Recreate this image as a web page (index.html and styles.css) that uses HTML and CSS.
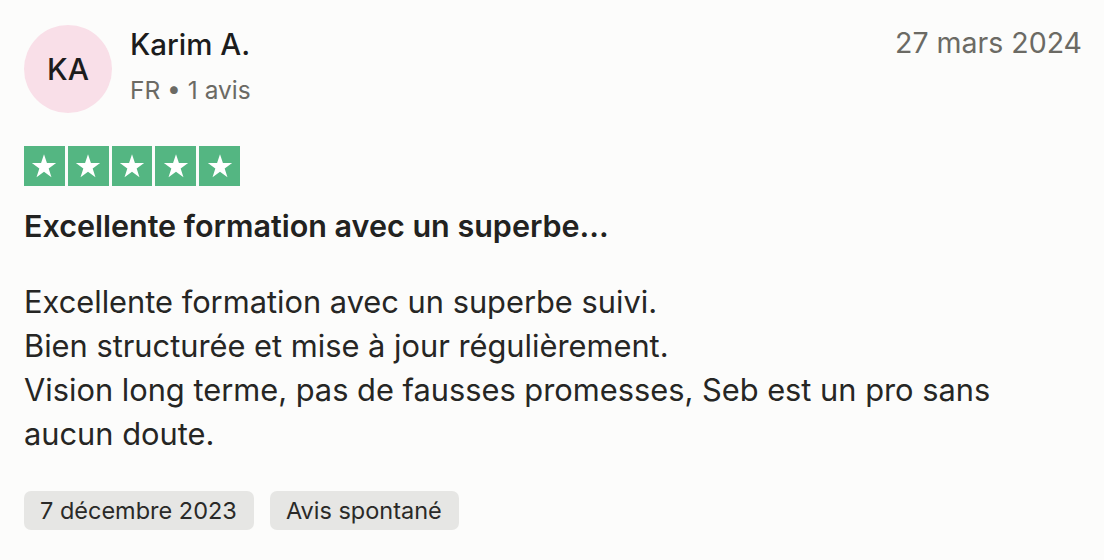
FILE: index.html
```html
<!DOCTYPE html>
<html lang="fr">
<head>
<meta charset="utf-8">
<link rel="stylesheet" href="styles.css">
</head>
<body>
<article class="review">
  <header class="head">
    <div class="avatar">KA</div>
    <div class="who">
      <div class="name">Karim A.</div>
      <div class="meta">FR • 1 avis</div>
    </div>
    <time class="date">27 mars 2024</time>
  </header>
  <div class="stars">
    <span class="star"><svg viewBox="0 0 24 24"><path d="M12 3.2l2.2 6.6h6.9l-5.6 4.1 2.1 6.6L12 16.4l-5.6 4.1 2.1-6.6-5.6-4.1h6.9z"/></svg></span>
    <span class="star"><svg viewBox="0 0 24 24"><path d="M12 3.2l2.2 6.6h6.9l-5.6 4.1 2.1 6.6L12 16.4l-5.6 4.1 2.1-6.6-5.6-4.1h6.9z"/></svg></span>
    <span class="star"><svg viewBox="0 0 24 24"><path d="M12 3.2l2.2 6.6h6.9l-5.6 4.1 2.1 6.6L12 16.4l-5.6 4.1 2.1-6.6-5.6-4.1h6.9z"/></svg></span>
    <span class="star"><svg viewBox="0 0 24 24"><path d="M12 3.2l2.2 6.6h6.9l-5.6 4.1 2.1 6.6L12 16.4l-5.6 4.1 2.1-6.6-5.6-4.1h6.9z"/></svg></span>
    <span class="star"><svg viewBox="0 0 24 24"><path d="M12 3.2l2.2 6.6h6.9l-5.6 4.1 2.1 6.6L12 16.4l-5.6 4.1 2.1-6.6-5.6-4.1h6.9z"/></svg></span>
  </div>
  <h2 class="title">Excellente formation avec un superbe...</h2>
  <p class="body">Excellente formation avec un superbe suivi.<br>Bien structurée et mise à jour régulièrement.<br>Vision long terme, pas de fausses promesses, Seb est un pro sans aucun doute.</p>
  <div class="tags">
    <span class="tag">7 décembre 2023</span>
    <span class="tag">Avis spontané</span>
  </div>
</article>
</body>
</html>
```
FILE: styles.css
```css
html, body {
  margin: 0;
  padding: 0;
  background: #fcfcfb;
}
body {
  font-family: Inter, "Noto Sans", sans-serif;
  color: #2a2a28;
}
.review {
  padding: 25px 22px 0 24px;
  width: 1058px;
}
.head {
  display: flex;
  align-items: flex-start;
}
.avatar {
  width: 88px;
  height: 88px;
  border-radius: 50%;
  background: #f9dfe8;
  display: flex;
  align-items: center;
  justify-content: center;
  font-size: 30px;
  font-weight: 500;
  color: #1c1c1c;
  flex-shrink: 0;
}
.who {
  margin-left: 18px;
  flex: 1;
  padding-top: 1px;
}
.name {
  font-size: 29.5px;
  font-weight: 500;
  line-height: 36px;
  color: #1c1c1c;
}
.meta {
  font-size: 24.5px;
  line-height: 30px;
  margin-top: 13px;
  color: #6b6a64;
}
.date {
  font-size: 28.5px;
  line-height: 36px;
  padding-top: 0;
  color: #6b6a64;
}
.stars {
  display: flex;
  gap: 3px;
  margin-top: 33px;
}
.star {
  width: 40.8px;
  height: 40px;
  background: #54b682;
  display: flex;
  align-items: center;
  justify-content: center;
}
.star svg {
  width: 32px;
  height: 32px;
  fill: #fff;
}
.title {
  margin: 22px 0 0;
  font-size: 30.5px;
  font-weight: 600;
  line-height: 36px;
  color: #222220;
}
.body {
  margin: 36px 0 0;
  max-width: 1030px;
  font-size: 30.8px;
  line-height: 44px;
  color: #262624;
}
.tags {
  display: flex;
  gap: 16px;
  margin-top: 35px;
}
.tag {
  background: #e6e6e4;
  border-radius: 7px;
  padding: 0 17px 0 16px;
  height: 39px;
  display: flex;
  align-items: center;
  font-size: 23.5px;
  color: #2a2a28;
}
```
